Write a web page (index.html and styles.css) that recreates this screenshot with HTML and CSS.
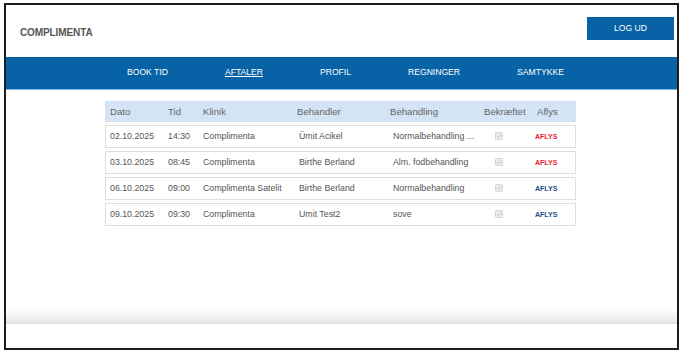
FILE: index.html
```html
<!DOCTYPE html>
<html lang="da">
<head>
<meta charset="utf-8">
<title>Complimenta - Aftaler</title>
<link rel="stylesheet" href="styles.css">
</head>
<body>
<div class="frame">
  <header class="top">
    <div class="brand">COMPLIMENTA</div>
    <button class="logout">LOG UD</button>
  </header>
  <nav class="nav">
    <a class="nav-item">BOOK TID</a>
    <a class="nav-item active">AFTALER</a>
    <a class="nav-item">PROFIL</a>
    <a class="nav-item">REGNINGER</a>
    <a class="nav-item">SAMTYKKE</a>
  </nav>
  <main class="main">
    <div class="table">
      <div class="thead">
        <span>Dato</span><span>Tid</span><span>Klinik</span><span>Behandler</span><span>Behandling</span><span>Bekræftet</span><span>Aflys</span>
      </div>
      <div class="row">
        <span>02.10.2025</span><span>14:30</span><span>Complimenta</span><span class="sh">Ümit Acikel</span><span class="sh2">Normalbehandling ...</span><span class="chk"><svg class="box" viewBox="0 0 8 8"><rect x="0.5" y="0.5" width="7" height="7" rx="1" fill="#ececec" stroke="#d4d4d4"/><path d="M2 4.2 L3.4 5.6 L6 2.6" fill="none" stroke="#c4c4c4" stroke-width="1"/></svg></span><span class="cancel red">AFLYS</span>
      </div>
      <div class="row">
        <span>03.10.2025</span><span>08:45</span><span>Complimenta</span><span class="sh">Birthe Berland</span><span class="sh2">Alm. fodbehandling</span><span class="chk"><svg class="box" viewBox="0 0 8 8"><rect x="0.5" y="0.5" width="7" height="7" rx="1" fill="#ececec" stroke="#d4d4d4"/><path d="M2 4.2 L3.4 5.6 L6 2.6" fill="none" stroke="#c4c4c4" stroke-width="1"/></svg></span><span class="cancel red">AFLYS</span>
      </div>
      <div class="row">
        <span>06.10.2025</span><span>09:00</span><span>Complimenta Satelit</span><span class="sh">Birthe Berland</span><span class="sh2">Normalbehandling</span><span class="chk"><svg class="box" viewBox="0 0 8 8"><rect x="0.5" y="0.5" width="7" height="7" rx="1" fill="#ececec" stroke="#d4d4d4"/><path d="M2 4.2 L3.4 5.6 L6 2.6" fill="none" stroke="#c4c4c4" stroke-width="1"/></svg></span><span class="cancel blue">AFLYS</span>
      </div>
      <div class="row">
        <span>09.10.2025</span><span>09:30</span><span>Complimenta</span><span class="sh">Umit Test2</span><span class="sh2">sove</span><span class="chk"><svg class="box" viewBox="0 0 8 8"><rect x="0.5" y="0.5" width="7" height="7" rx="1" fill="#ececec" stroke="#d4d4d4"/><path d="M2 4.2 L3.4 5.6 L6 2.6" fill="none" stroke="#c4c4c4" stroke-width="1"/></svg></span><span class="cancel blue">AFLYS</span>
      </div>
    </div>
  </main>
  <footer class="foot">
    <div class="shade"></div>
  </footer>
</div>
</body>
</html>
```

FILE: styles.css
```css
* { box-sizing: border-box; }
html, body { margin: 0; background: #fff; }
body {
  padding: 3px 0 0 4px;
  font-family: "Liberation Sans", Arial, sans-serif;
}
.frame {
  width: 675px;
  height: 347px;
  border: 2px solid #1c1c1c;
  display: flex;
  flex-direction: column;
  background: #fff;
}
.top {
  height: 52px;
  display: flex;
  align-items: flex-start;
  justify-content: space-between;
  padding: 12px 3px 0 14px;
}
.brand {
  font-size: 10px;
  font-weight: bold;
  color: #555;
  margin-top: 10px;
  letter-spacing: -0.1px;
}
.logout {
  width: 87px;
  height: 23px;
  border: none;
  background: #0762a6;
  color: #fff;
  font-family: inherit;
  font-size: 8.6px;
  padding: 0 0 2px 0;
}
.nav {
  height: 33px;
  background: #0762a6;
  border-bottom: 1px solid #7fb2de;
  display: flex;
  align-items: center;
  gap: 57px;
  padding: 0 0 2px 121px;
}
.nav-item {
  color: #fff;
  font-size: 8.6px;
  text-decoration: none;
}
.nav-item.active { text-decoration: underline; }
.main {
  flex: 1;
  padding: 11px 0 0 99px;
}
.table { width: 471px; }
.thead, .row {
  display: grid;
  grid-template-columns: 58px 35px 94px 93px 94px 53px 1fr;
  align-items: center;
  padding-left: 5px;
}
.thead {
  height: 21px;
  background: #d3e5f4;
  font-size: 9.6px;
  color: #666;
  margin-bottom: 3px;
}
.row {
  height: 23px;
  border: 1px solid #dedede;
  margin-bottom: 3px;
  font-size: 8.8px;
  color: #555;
  padding-left: 4px;
  padding-bottom: 2px;
}
.sh { padding-left: 2px; }
.sh2 { padding-left: 3px; }
.chk { padding-left: 11px; display: flex; padding-top: 1px; }
.box {
  width: 8px;
  height: 8px;
  display: block;
}
.cancel {
  font-size: 7px;
  font-weight: bold;
  margin-left: -2px;
  padding-top: 2px;
}
.red { color: #e8202a; }
.blue { color: #1c4d8c; }
.foot {
  height: 39px;
}
.shade {
  height: 15px;
  background: linear-gradient(#ffffff, #f4f4f4 50%, #e4e4e4);
  border-bottom: 1px solid #dcdcdc;
}
```
